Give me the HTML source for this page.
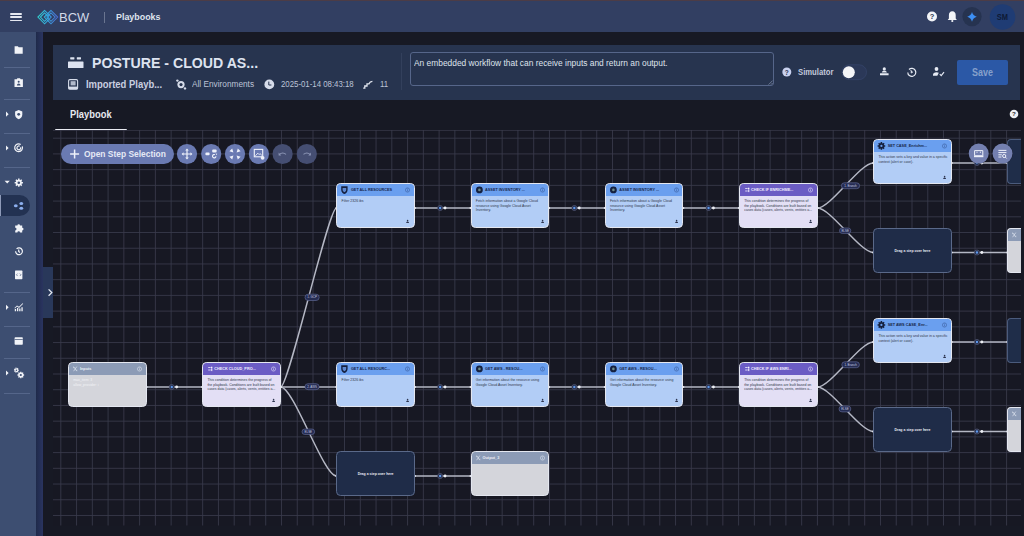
<!DOCTYPE html><html><head><meta charset="utf-8"><title>Playbooks</title><style>
*{box-sizing:border-box}
html,body{margin:0;padding:0;width:1024px;height:536px;overflow:hidden;background:#171924;font-family:"Liberation Sans",sans-serif;}
.a{position:absolute}
.node{position:absolute;width:78.5px;height:44.8px;border-radius:4.5px;overflow:hidden;border:1px solid #e4e7f0}
.node .hd{position:absolute;left:0;top:0;right:0;height:11.6px}
.node .tt{position:absolute;left:14px;top:3.6px;font-size:3.8px;font-weight:bold;white-space:nowrap;letter-spacing:0}
.node .bd{position:absolute;left:4.2px;top:15.2px;font-size:3.5px;line-height:4.5px;color:#30374b;white-space:nowrap}
.gray .bd{color:#f2f3f6}
.blue{background:#b2cdf6}
.blue .hd{background:#6a9fef}
.blue .tt{color:#172649}
.purp{background:#e3dff5}
.purp .hd{background:#6b5cc4}
.purp .tt{color:#f1efff}
.gray{background:#d4d5db}
.gray .hd{background:#8c9bb6}
.gray .tt{color:#eef1f7}
.drag{position:absolute;width:78.5px;height:44.6px;border-radius:4.5px;background:#1f2c48;border:1px solid #5a6989}
.drag span{position:absolute;left:0;right:0;top:20.3px;text-align:center;color:#e9ecf4;font-size:3.5px;font-weight:bold}
</style></head><body>
<div class="a" style="left:0;top:0;width:1024px;height:32px;background:#323f62"></div>
<div class="a" style="left:0;top:0;width:1024px;height:1px;background:#4c3c46"></div>
<div class="a" style="left:10px;top:13px;width:12px;height:1.6px;background:#e5e8f0;border-radius:1px"></div>
<div class="a" style="left:10px;top:16.3px;width:12px;height:1.6px;background:#e5e8f0;border-radius:1px"></div>
<div class="a" style="left:10px;top:19.6px;width:12px;height:1.6px;background:#e5e8f0;border-radius:1px"></div>
<svg class="a" style="left:34px;top:6px" width="28" height="22" viewBox="34 6 28 22">
<defs><linearGradient id="lg" gradientUnits="userSpaceOnUse" x1="37" x2="58" y1="0" y2="0"><stop offset="0" stop-color="#31d4cc"/><stop offset="0.5" stop-color="#35a9e2"/><stop offset="1" stop-color="#4d68d0"/></linearGradient></defs>
<g fill="none" stroke="url(#lg)" stroke-width="1.05">
<path d="M44.6 10.4 L37.9 17.1 L44.6 23.8 L51.3 17.1z"/>
<path d="M44.6 12.9 L40.4 17.1 L44.6 21.3 L48.8 17.1z"/>
<path d="M51 10.4 L44.3 17.1 L51 23.8 L57.7 17.1z"/>
<path d="M51 12.9 L46.8 17.1 L51 21.3 L55.2 17.1z"/>
</g><circle cx="47.8" cy="17.1" r="0.9" fill="#2f8fd0"/></svg>
<div class="a" style="left:59.4px;top:11.57px;font-size:12.21px;line-height:1;font-weight:normal;color:#d3dae8;white-space:nowrap;transform-origin:0 0;transform:scaleX(1.060);">BCW</div>
<div class="a" style="left:104px;top:11.5px;width:1px;height:11px;background:#6a7590"></div>
<div class="a" style="left:115.5px;top:12.54px;font-size:9.05px;line-height:1;font-weight:bold;color:#dfe4ee;white-space:nowrap;transform-origin:0 0;transform:scaleX(0.982);">Playbooks</div>
<svg class="a" style="left:920px;top:0" width="104" height="34" viewBox="0 0 104 34">
<circle cx="12" cy="16.5" r="5" fill="#f2f4f8"/>
<text x="12" y="19.3" font-size="7.5" font-weight="bold" text-anchor="middle" fill="#2b3550" font-family="Liberation Sans">?</text>
<path d="M32.3 11.3 c-2.3 0 -3.4 1.8 -3.4 3.8 v3.3 l-1.2 1.6 h9.2 l-1.2 -1.6 v-3.3 c0 -2 -1.1 -3.8 -3.4 -3.8z" fill="#f2f4f8"/>
<circle cx="32.3" cy="21" r="1.1" fill="#f2f4f8"/>
<circle cx="52" cy="16.6" r="9.6" fill="#263350"/>
<path d="M52 12 Q53 15.8 56.8 16.8 Q53 17.8 52 21.8 Q51 17.8 47.2 16.8 Q51 15.8 52 12z" fill="#3d8ff3"/>
<circle cx="82.5" cy="17" r="12.8" fill="#1f3c74"/>
<text x="82.3" y="20.1" font-size="8.2" font-weight="bold" text-anchor="middle" fill="#0e1a35" font-family="Liberation Sans" textLength="11.2" lengthAdjust="spacingAndGlyphs">SM</text>
</svg>
<div class="a" style="left:0;top:32px;width:36px;height:504px;background:#3d4e71"></div>
<div class="a" style="left:36px;top:32px;width:7px;height:504px;background:linear-gradient(90deg,#1f2a4a,#2a3460)"></div>
<div class="a" style="left:4px;top:66.5px;width:26px;height:1px;background:#55668a"></div>
<div class="a" style="left:4px;top:98.5px;width:26px;height:1px;background:#55668a"></div>
<div class="a" style="left:4px;top:133px;width:26px;height:1px;background:#55668a"></div>
<div class="a" style="left:4px;top:166.5px;width:26px;height:1px;background:#55668a"></div>
<div class="a" style="left:4px;top:291.5px;width:26px;height:1px;background:#55668a"></div>
<div class="a" style="left:4px;top:326px;width:26px;height:1px;background:#55668a"></div>
<div class="a" style="left:4px;top:357.5px;width:26px;height:1px;background:#55668a"></div>
<div class="a" style="left:4px;top:392.5px;width:26px;height:1px;background:#55668a"></div>
<div class="a" style="left:0;top:195px;width:30px;height:21px;background:#233252;border-radius:0 11px 11px 0"></div>
<div class="a" style="left:0;top:195px;width:1.2px;height:21px;background:#8e9ab8"></div>
<svg class="a" style="left:0;top:32px" width="36" height="504" viewBox="0 32 36 504">
<g fill="#f1f3f8">
<!-- folder -->
<path d="M14.6 46.2 h3.2 l0.9 1 h4 v6.6 h-8.1z"/>
<!-- badge -->
<path d="M14.5 79.3 h2.2 l0.7 -1 h2.6 l0.7 1 h2.2 v7.6 h-8.4z"/>
<!-- shield -->
<path d="M18.7 110 l3.6 1.4 v3 c0 2.5 -1.6 4 -3.6 4.8 c-2 -0.8 -3.6 -2.3 -3.6 -4.8 v-3z"/>
<!-- arrows -->
<path d="M6 111.6 l2.6 2.6 l-2.6 2.6z"/>
<path d="M6 145.4 l2.6 2.6 l-2.6 2.6z"/>
<path d="M4.6 180.8 l5.2 0 l-2.6 2.8z"/>
<path d="M6 304.7 l2.6 2.6 l-2.6 2.6z"/>
<path d="M6 370.4 l2.6 2.6 l-2.6 2.6z"/>
<!-- chart -->
<path d="M14.8 311.2 h1.3 v-2.2 h-1.3z M17 311.2 h1.3 v-3.2 h-1.3z M19.2 311.2 h1.3 v-2.6 h-1.3z M21.4 311.2 h1.3 v-4 h-1.3z"/><path d="M14.4 308 l2.6 -2.6 l2 1.4 l3.6 -3.6 l0.6 0.6 l-4.2 4.2 l-2 -1.4 l-2 2z"/>
<!-- window -->
<rect x="14.6" y="337.3" width="8.2" height="7.4" rx="0.8"/>
<!-- code doc -->
<rect x="15" y="270.6" width="7.4" height="8.6" rx="0.6"/>
<!-- puzzle -->
<path d="M15.2 225.6 h2.2 a1.3 1.3 0 0 1 2.6 0 h2.2 v2.2 a1.3 1.3 0 0 1 0 2.6 v2.2 h-2.2 a1.3 1.3 0 0 0 -2.6 0 h-2.2 v-2.2 a1.3 1.3 0 0 0 0 -2.6z"/>
</g>
<g fill="none" stroke="#f1f3f8" stroke-width="1.2">
<!-- radar -->
<path d="M22.3 146.4 a3.9 3.9 0 1 1 -1.6 -2"/><path d="M20.6 147.2 a1.9 1.9 0 1 1 -0.9 -1"/>
<!-- gear -->

<!-- history -->
<path d="M15.6 251.3 a3.4 3.4 0 1 0 1 -2.4"/>
<path d="M18.7 249.6 v1.9 l1.2 0.9"/>
<!-- gears -->

</g>
<g fill="#3d4e71">
<path d="M17.6 273.6 l-1.2 1.2 l1.2 1.2 M19.8 273.6 l1.2 1.2 l-1.2 1.2" fill="none" stroke="#3d4e71" stroke-width="0.6"/>
<circle cx="18.7" cy="81.8" r="1"/><path d="M16.9 85.4 c0 -1.3 0.8 -2 1.8 -2 c1 0 1.8 0.7 1.8 2z"/>
<circle cx="18.7" cy="114.3" r="1.4"/>
<rect x="14.6" y="339.2" width="8.2" height="0.7"/>
</g>
<g fill="#f1f3f8">
<path d="M17.5 178.8 h2.6 l0.4 1.4 l1.3 -0.6 l1.3 2.1 l-1 1 l1 1 l-1.3 2.1 l-1.3 -0.6 l-0.4 1.4 h-2.6 l-0.4 -1.4 l-1.3 0.6 l-1.3 -2.1 l1 -1 l-1 -1 l1.3 -2.1 l1.3 0.6z" opacity="0"/>
</g>
<path d="M21.81 181.96 L22.93 181.96 L22.93 183.44 L21.81 183.44 L21.45 184.31 L22.25 185.10 L21.20 186.15 L20.41 185.35 L19.54 185.71 L19.54 186.83 L18.06 186.83 L18.06 185.71 L17.19 185.35 L16.40 186.15 L15.35 185.10 L16.15 184.31 L15.79 183.44 L14.67 183.44 L14.67 181.96 L15.79 181.96 L16.15 181.09 L15.35 180.30 L16.40 179.25 L17.19 180.05 L18.06 179.69 L18.06 178.57 L19.54 178.57 L19.54 179.69 L20.41 180.05 L21.20 179.25 L22.25 180.30 L21.45 181.09z" fill="#f1f3f8"/><circle cx="18.8" cy="182.7" r="1.3" fill="#3d4e71"/>
<path d="M18.12 369.67 L18.93 369.62 L18.93 370.78 L18.12 370.73 L17.88 371.22 L18.43 371.82 L17.53 372.54 L17.06 371.87 L16.53 372.00 L16.40 372.80 L15.27 372.54 L15.50 371.76 L15.08 371.42 L14.37 371.82 L13.87 370.78 L14.62 370.47 L14.62 369.93 L13.87 369.62 L14.37 368.58 L15.08 368.98 L15.50 368.64 L15.27 367.86 L16.40 367.60 L16.53 368.40 L17.06 368.53 L17.53 367.86 L18.43 368.58 L17.88 369.18z" fill="#f1f3f8"/><circle cx="16.4" cy="370.2" r="0.8" fill="#3d4e71"/><path d="M23.22 374.36 L24.13 374.34 L24.13 375.66 L23.22 375.64 L22.96 376.26 L23.63 376.89 L22.69 377.83 L22.06 377.16 L21.44 377.42 L21.46 378.33 L20.14 378.33 L20.16 377.42 L19.54 377.16 L18.91 377.83 L17.97 376.89 L18.64 376.26 L18.38 375.64 L17.47 375.66 L17.47 374.34 L18.38 374.36 L18.64 373.74 L17.97 373.11 L18.91 372.17 L19.54 372.84 L20.16 372.58 L20.14 371.67 L21.46 371.67 L21.44 372.58 L22.06 372.84 L22.69 372.17 L23.63 373.11 L22.96 373.74z" fill="#f1f3f8"/><circle cx="20.8" cy="375" r="1.1" fill="#3d4e71"/>
<!-- share icon in active -->
<g fill="#8db0ef">
<ellipse cx="15.8" cy="205.8" rx="1.9" ry="1.5"/>
<ellipse cx="21.3" cy="203.6" rx="1.9" ry="1.5"/>
<ellipse cx="21.3" cy="208.2" rx="1.9" ry="1.5"/>
</g>
</svg>
<div class="a" style="left:43px;top:267px;width:15px;height:50.5px;background:#29385a;border-radius:0 3px 3px 0"></div>
<svg class="a" style="left:46px;top:287px" width="10" height="12"><path d="M2.6 2.4 L5.8 5.6 L2.6 8.8" fill="none" stroke="#e8ecf4" stroke-width="1.3"/></svg>
<div class="a" style="left:53px;top:44.5px;width:966.5px;height:55px;background:#27344f"></div>
<svg class="a" style="left:66px;top:54px" width="20" height="16" viewBox="0 0 20 16">
<g fill="#dde3f0"><rect x="2" y="7.5" width="15.5" height="6.6" rx="0.6"/><rect x="4.2" y="3.2" width="4.2" height="2.2" rx="0.4"/><rect x="10.8" y="3.2" width="4.2" height="2.2" rx="0.4"/></g></svg>
<div class="a" style="left:91.6px;top:55.88px;font-size:14.68px;line-height:1;font-weight:bold;color:#dde3f0;white-space:nowrap;transform-origin:0 0;transform:scaleX(0.964);">POSTURE - CLOUD AS...</div>
<svg class="a" style="left:64px;top:76px" width="230" height="16" viewBox="64 76 230 16">
<g fill="none" stroke="#d6dcea" stroke-width="1.1"><rect x="68.6" y="79.6" width="9" height="9.6" rx="1.2"/></g>
<rect x="70.6" y="81.2" width="5" height="4.2" fill="#d6dcea" opacity="0.8"/><rect x="68.6" y="86.6" width="9" height="2.6" fill="#d6dcea"/>
<g fill="#d6dcea"><circle cx="181" cy="84.6" r="3.6"/><circle cx="177.4" cy="80.6" r="1.2"/><circle cx="185" cy="88.4" r="1.2"/></g>
<circle cx="181" cy="84.6" r="1.6" fill="#27344f"/>
<circle cx="269.3" cy="84.4" r="4.9" fill="#d6dcea"/>
<path d="M268.8 81.6 v3.4 h2.6" fill="none" stroke="#27344f" stroke-width="1"/>
</g>
</svg>
<div class="a" style="left:86px;top:79.62px;font-size:10.01px;line-height:1;font-weight:bold;color:#c9cfe0;white-space:nowrap;transform-origin:0 0;transform:scaleX(0.944);">Imported Playb...</div>
<div class="a" style="left:192.3px;top:79.94px;font-size:9.05px;line-height:1;font-weight:normal;color:#bcc3d6;white-space:nowrap;transform-origin:0 0;transform:scaleX(0.914);">All Environments</div>
<div class="a" style="left:280.8px;top:80.34px;font-size:9.05px;line-height:1;font-weight:normal;color:#bcc3d6;white-space:nowrap;transform-origin:0 0;transform:scaleX(0.865);">2025-01-14 08:43:18</div>
<svg class="a" style="left:360px;top:78px" width="16" height="14"><path d="M3.2 10.2 h1.6 v-2.2 h2.2 v-2.2 h2 c0.6 -1.4 1.6 -2.2 3.4 -2.4" fill="none" stroke="#e3e7f0" stroke-width="1.3"/></svg>
<div class="a" style="left:379.7px;top:80.34px;font-size:9.05px;line-height:1;font-weight:normal;color:#bcc3d6;white-space:nowrap;transform-origin:0 0;transform:scaleX(0.865);">11</div>
<div class="a" style="left:401px;top:53px;width:1px;height:37px;background:#33405c"></div>
<div class="a" style="left:409.5px;top:52px;width:364px;height:33.5px;border:1px solid #56668a;border-radius:3px;background:#27344f"></div>
<svg class="a" style="left:766px;top:78px" width="8" height="8"><path d="M6.6 2.6 l-4 4 M6.6 5 l-1.6 1.6" stroke="#8a96b0" stroke-width="0.7"/></svg>
<div class="a" style="left:414.3px;top:58.74px;font-size:9.05px;line-height:1;font-weight:normal;color:#dfe3ec;white-space:nowrap;transform-origin:0 0;transform:scaleX(0.927);">An embedded workflow that can receive inputs and return an output.</div>
<svg class="a" style="left:775px;top:55px" width="180" height="35" viewBox="775 55 180 35">
<circle cx="786.8" cy="72" r="4.5" fill="#c9d1ef"/>
<text x="786.8" y="74.6" font-size="6.5" font-weight="bold" text-anchor="middle" fill="#27344f" font-family="Liberation Sans">?</text>
<rect x="842" y="64.8" width="24.5" height="14.8" rx="7.4" fill="#2b3858" stroke="#35446a" stroke-width="0.8"/>
<circle cx="848.8" cy="72.2" r="6" fill="#f4f5f8"/>
<g fill="#e6eaf3">
<circle cx="884.3" cy="68.9" r="1.6"/><path d="M881.8 72.6 c0 -1.2 1.1 -1.8 2.5 -1.8 c1.4 0 2.5 0.6 2.5 1.8z"/>
<rect x="880" y="73.2" width="8.6" height="2" rx="0.3"/>
<path d="M933 75.8 v-1 c0 -1.6 1.4 -2.6 3.5 -2.6 c0.9 0 1.7 0.2 2.3 0.6 l-1.5 3z"/>
</g>
<circle cx="936.5" cy="69" r="1.9" fill="#e6eaf3"/>
<g fill="none" stroke="#e6eaf3" stroke-width="1.2">
<path d="M907.8 72.4 a4 4 0 1 0 1.2 -2.9"/>
<path d="M910.6 70.4 l1.6 1.8 l-1.4 0.8"/>
<path d="M939.8 74.2 l1.4 1.4 l2.8 -3.4" stroke-width="1.2"/>
</g>
</svg>
<div class="a" style="left:797.5px;top:68.38px;font-size:8.64px;line-height:1;font-weight:bold;color:#c3c9dc;white-space:nowrap;transform-origin:0 0;transform:scaleX(0.891);">Simulator</div>
<div class="a" style="left:957px;top:59.5px;width:51px;height:25.5px;background:#2b58a6;border-radius:2px"></div>
<div class="a" style="left:971.8px;top:67.61px;font-size:10.15px;line-height:1;font-weight:bold;color:#86a0cb;white-space:nowrap;transform-origin:0 0;transform:scaleX(0.882);">Save</div>
<div class="a" style="left:69.5px;top:110.21px;font-size:10.15px;line-height:1;font-weight:bold;color:#e6e8ef;white-space:nowrap;transform-origin:0 0;transform:scaleX(0.924);">Playbook</div>
<div class="a" style="left:54.5px;top:128.6px;width:72px;height:2px;background:#e9ebf2;border-radius:1px"></div>
<svg class="a" style="left:1008px;top:108px" width="12" height="12"><circle cx="6" cy="6" r="4.3" fill="#eef0f5"/><text x="6" y="8.4" font-size="6.2" font-weight="bold" text-anchor="middle" fill="#1b1c26" font-family="Liberation Sans">?</text></svg>
<div class="a" style="left:53px;top:130px;width:968px;height:395.5px;background:#171823;overflow:hidden">
<svg class="a" style="left:0;top:0" width="968" height="395.5" viewBox="53 130 968 395.5">
<g stroke="#3a3b4c" stroke-width="0.85">
<line x1="60.80" y1="130" x2="60.80" y2="525.5"/>
<line x1="76.56" y1="130" x2="76.56" y2="525.5"/>
<line x1="92.33" y1="130" x2="92.33" y2="525.5"/>
<line x1="108.09" y1="130" x2="108.09" y2="525.5"/>
<line x1="123.85" y1="130" x2="123.85" y2="525.5"/>
<line x1="139.62" y1="130" x2="139.62" y2="525.5"/>
<line x1="155.38" y1="130" x2="155.38" y2="525.5"/>
<line x1="171.14" y1="130" x2="171.14" y2="525.5"/>
<line x1="186.90" y1="130" x2="186.90" y2="525.5"/>
<line x1="202.67" y1="130" x2="202.67" y2="525.5"/>
<line x1="218.43" y1="130" x2="218.43" y2="525.5"/>
<line x1="234.19" y1="130" x2="234.19" y2="525.5"/>
<line x1="249.96" y1="130" x2="249.96" y2="525.5"/>
<line x1="265.72" y1="130" x2="265.72" y2="525.5"/>
<line x1="281.48" y1="130" x2="281.48" y2="525.5"/>
<line x1="297.25" y1="130" x2="297.25" y2="525.5"/>
<line x1="313.01" y1="130" x2="313.01" y2="525.5"/>
<line x1="328.77" y1="130" x2="328.77" y2="525.5"/>
<line x1="344.53" y1="130" x2="344.53" y2="525.5"/>
<line x1="360.30" y1="130" x2="360.30" y2="525.5"/>
<line x1="376.06" y1="130" x2="376.06" y2="525.5"/>
<line x1="391.82" y1="130" x2="391.82" y2="525.5"/>
<line x1="407.59" y1="130" x2="407.59" y2="525.5"/>
<line x1="423.35" y1="130" x2="423.35" y2="525.5"/>
<line x1="439.11" y1="130" x2="439.11" y2="525.5"/>
<line x1="454.87" y1="130" x2="454.87" y2="525.5"/>
<line x1="470.64" y1="130" x2="470.64" y2="525.5"/>
<line x1="486.40" y1="130" x2="486.40" y2="525.5"/>
<line x1="502.16" y1="130" x2="502.16" y2="525.5"/>
<line x1="517.93" y1="130" x2="517.93" y2="525.5"/>
<line x1="533.69" y1="130" x2="533.69" y2="525.5"/>
<line x1="549.45" y1="130" x2="549.45" y2="525.5"/>
<line x1="565.22" y1="130" x2="565.22" y2="525.5"/>
<line x1="580.98" y1="130" x2="580.98" y2="525.5"/>
<line x1="596.74" y1="130" x2="596.74" y2="525.5"/>
<line x1="612.50" y1="130" x2="612.50" y2="525.5"/>
<line x1="628.27" y1="130" x2="628.27" y2="525.5"/>
<line x1="644.03" y1="130" x2="644.03" y2="525.5"/>
<line x1="659.79" y1="130" x2="659.79" y2="525.5"/>
<line x1="675.56" y1="130" x2="675.56" y2="525.5"/>
<line x1="691.32" y1="130" x2="691.32" y2="525.5"/>
<line x1="707.08" y1="130" x2="707.08" y2="525.5"/>
<line x1="722.85" y1="130" x2="722.85" y2="525.5"/>
<line x1="738.61" y1="130" x2="738.61" y2="525.5"/>
<line x1="754.37" y1="130" x2="754.37" y2="525.5"/>
<line x1="770.14" y1="130" x2="770.14" y2="525.5"/>
<line x1="785.90" y1="130" x2="785.90" y2="525.5"/>
<line x1="801.66" y1="130" x2="801.66" y2="525.5"/>
<line x1="817.42" y1="130" x2="817.42" y2="525.5"/>
<line x1="833.19" y1="130" x2="833.19" y2="525.5"/>
<line x1="848.95" y1="130" x2="848.95" y2="525.5"/>
<line x1="864.71" y1="130" x2="864.71" y2="525.5"/>
<line x1="880.48" y1="130" x2="880.48" y2="525.5"/>
<line x1="896.24" y1="130" x2="896.24" y2="525.5"/>
<line x1="912.00" y1="130" x2="912.00" y2="525.5"/>
<line x1="927.77" y1="130" x2="927.77" y2="525.5"/>
<line x1="943.53" y1="130" x2="943.53" y2="525.5"/>
<line x1="959.29" y1="130" x2="959.29" y2="525.5"/>
<line x1="975.05" y1="130" x2="975.05" y2="525.5"/>
<line x1="990.82" y1="130" x2="990.82" y2="525.5"/>
<line x1="1006.58" y1="130" x2="1006.58" y2="525.5"/>
<line x1="53" y1="138.20" x2="1021" y2="138.20"/>
<line x1="53" y1="153.92" x2="1021" y2="153.92"/>
<line x1="53" y1="169.64" x2="1021" y2="169.64"/>
<line x1="53" y1="185.36" x2="1021" y2="185.36"/>
<line x1="53" y1="201.08" x2="1021" y2="201.08"/>
<line x1="53" y1="216.80" x2="1021" y2="216.80"/>
<line x1="53" y1="232.52" x2="1021" y2="232.52"/>
<line x1="53" y1="248.24" x2="1021" y2="248.24"/>
<line x1="53" y1="263.96" x2="1021" y2="263.96"/>
<line x1="53" y1="279.68" x2="1021" y2="279.68"/>
<line x1="53" y1="295.40" x2="1021" y2="295.40"/>
<line x1="53" y1="311.12" x2="1021" y2="311.12"/>
<line x1="53" y1="326.84" x2="1021" y2="326.84"/>
<line x1="53" y1="342.56" x2="1021" y2="342.56"/>
<line x1="53" y1="358.28" x2="1021" y2="358.28"/>
<line x1="53" y1="374.00" x2="1021" y2="374.00"/>
<line x1="53" y1="389.72" x2="1021" y2="389.72"/>
<line x1="53" y1="405.44" x2="1021" y2="405.44"/>
<line x1="53" y1="421.16" x2="1021" y2="421.16"/>
<line x1="53" y1="436.88" x2="1021" y2="436.88"/>
<line x1="53" y1="452.60" x2="1021" y2="452.60"/>
<line x1="53" y1="468.32" x2="1021" y2="468.32"/>
<line x1="53" y1="484.04" x2="1021" y2="484.04"/>
<line x1="53" y1="499.76" x2="1021" y2="499.76"/>
<line x1="53" y1="515.48" x2="1021" y2="515.48"/>
<line x1="53" y1="130.3" x2="1021" y2="130.3"/>
</g>
<g fill="none" stroke="#b4b7c4" stroke-width="1.45">
<path d="M146.5 387 L202.2 387"/>
<path d="M414.9 208 L470.59999999999997 208"/>
<path d="M549.0999999999999 208 L604.8 208"/>
<path d="M683.3 208 L739.0 208"/>
<path d="M951.6999999999999 163 L1007.3999999999999 163"/>
<path d="M951.6999999999999 252.5 L1007.3999999999999 252.5"/>
<path d="M414.9 387 L470.59999999999997 387"/>
<path d="M549.0999999999999 387 L604.8 387"/>
<path d="M683.3 387 L739.0 387"/>
<path d="M951.6999999999999 342 L1007.3999999999999 342"/>
<path d="M951.6999999999999 431.5 L1007.3999999999999 431.5"/>
<path d="M414.9 476 L470.59999999999997 476"/>
<path d="M280.7 387 C288.7 387 328.4 208 336.4 208"/>
<path d="M280.7 387 C293.7 387 323.4 387 336.4 387"/>
<path d="M280.7 387 C293.7 387 323.4 476 336.4 476"/>
<path d="M817.5 208 C830.5 208 860.1999999999999 163 873.1999999999999 163"/>
<path d="M817.5 208 C830.5 208 860.1999999999999 252.5 873.1999999999999 252.5"/>
<path d="M817.5 387 C830.5 387 860.1999999999999 342 873.1999999999999 342"/>
<path d="M817.5 387 C830.5 387 860.1999999999999 431.5 873.1999999999999 431.5"/>
</g>
<g fill="#e8eaf0">
<circle cx="146.5" cy="387" r="1.1"/><circle cx="202.2" cy="387" r="1.1"/>
<circle cx="414.9" cy="208" r="1.1"/><circle cx="470.59999999999997" cy="208" r="1.1"/>
<circle cx="549.0999999999999" cy="208" r="1.1"/><circle cx="604.8" cy="208" r="1.1"/>
<circle cx="683.3" cy="208" r="1.1"/><circle cx="739.0" cy="208" r="1.1"/>
<circle cx="951.6999999999999" cy="163" r="1.1"/><circle cx="1007.3999999999999" cy="163" r="1.1"/>
<circle cx="951.6999999999999" cy="252.5" r="1.1"/><circle cx="1007.3999999999999" cy="252.5" r="1.1"/>
<circle cx="414.9" cy="387" r="1.1"/><circle cx="470.59999999999997" cy="387" r="1.1"/>
<circle cx="549.0999999999999" cy="387" r="1.1"/><circle cx="604.8" cy="387" r="1.1"/>
<circle cx="683.3" cy="387" r="1.1"/><circle cx="739.0" cy="387" r="1.1"/>
<circle cx="951.6999999999999" cy="342" r="1.1"/><circle cx="1007.3999999999999" cy="342" r="1.1"/>
<circle cx="951.6999999999999" cy="431.5" r="1.1"/><circle cx="1007.3999999999999" cy="431.5" r="1.1"/>
<circle cx="414.9" cy="476" r="1.1"/><circle cx="470.59999999999997" cy="476" r="1.1"/>
<circle cx="280.7" cy="387" r="1.1"/><circle cx="336.4" cy="208" r="1.1"/>
<circle cx="280.7" cy="387" r="1.1"/><circle cx="336.4" cy="387" r="1.1"/>
<circle cx="280.7" cy="387" r="1.1"/><circle cx="336.4" cy="476" r="1.1"/>
<circle cx="817.5" cy="208" r="1.1"/><circle cx="873.1999999999999" cy="163" r="1.1"/>
<circle cx="817.5" cy="208" r="1.1"/><circle cx="873.1999999999999" cy="252.5" r="1.1"/>
<circle cx="817.5" cy="387" r="1.1"/><circle cx="873.1999999999999" cy="342" r="1.1"/>
<circle cx="817.5" cy="387" r="1.1"/><circle cx="873.1999999999999" cy="431.5" r="1.1"/>
</g>
<circle cx="171.75" cy="387" r="2.5" fill="#1e2540" stroke="#545b78" stroke-width="0.8"/>
<circle cx="171.75" cy="387" r="1.2" fill="#5f98ea"/>
<circle cx="176.65" cy="387" r="1.4" fill="#eef0f5"/>
<circle cx="440.15" cy="208" r="2.5" fill="#1e2540" stroke="#545b78" stroke-width="0.8"/>
<circle cx="440.15" cy="208" r="1.2" fill="#5f98ea"/>
<circle cx="445.05" cy="208" r="1.4" fill="#eef0f5"/>
<circle cx="574.3499999999999" cy="208" r="2.5" fill="#1e2540" stroke="#545b78" stroke-width="0.8"/>
<circle cx="574.3499999999999" cy="208" r="1.2" fill="#5f98ea"/>
<circle cx="579.2499999999999" cy="208" r="1.4" fill="#eef0f5"/>
<circle cx="708.55" cy="208" r="2.5" fill="#1e2540" stroke="#545b78" stroke-width="0.8"/>
<circle cx="708.55" cy="208" r="1.2" fill="#5f98ea"/>
<circle cx="713.4499999999999" cy="208" r="1.4" fill="#eef0f5"/>
<circle cx="976.9499999999999" cy="163" r="2.5" fill="#1e2540" stroke="#545b78" stroke-width="0.8"/>
<circle cx="976.9499999999999" cy="163" r="1.2" fill="#5f98ea"/>
<circle cx="981.8499999999999" cy="163" r="1.4" fill="#eef0f5"/>
<circle cx="976.9499999999999" cy="252.5" r="2.5" fill="#1e2540" stroke="#545b78" stroke-width="0.8"/>
<circle cx="976.9499999999999" cy="252.5" r="1.2" fill="#5f98ea"/>
<circle cx="981.8499999999999" cy="252.5" r="1.4" fill="#eef0f5"/>
<circle cx="440.15" cy="387" r="2.5" fill="#1e2540" stroke="#545b78" stroke-width="0.8"/>
<circle cx="440.15" cy="387" r="1.2" fill="#5f98ea"/>
<circle cx="445.05" cy="387" r="1.4" fill="#eef0f5"/>
<circle cx="574.3499999999999" cy="387" r="2.5" fill="#1e2540" stroke="#545b78" stroke-width="0.8"/>
<circle cx="574.3499999999999" cy="387" r="1.2" fill="#5f98ea"/>
<circle cx="579.2499999999999" cy="387" r="1.4" fill="#eef0f5"/>
<circle cx="708.55" cy="387" r="2.5" fill="#1e2540" stroke="#545b78" stroke-width="0.8"/>
<circle cx="708.55" cy="387" r="1.2" fill="#5f98ea"/>
<circle cx="713.4499999999999" cy="387" r="1.4" fill="#eef0f5"/>
<circle cx="976.9499999999999" cy="342" r="2.5" fill="#1e2540" stroke="#545b78" stroke-width="0.8"/>
<circle cx="976.9499999999999" cy="342" r="1.2" fill="#5f98ea"/>
<circle cx="981.8499999999999" cy="342" r="1.4" fill="#eef0f5"/>
<circle cx="976.9499999999999" cy="431.5" r="2.5" fill="#1e2540" stroke="#545b78" stroke-width="0.8"/>
<circle cx="976.9499999999999" cy="431.5" r="1.2" fill="#5f98ea"/>
<circle cx="981.8499999999999" cy="431.5" r="1.4" fill="#eef0f5"/>
<circle cx="440.15" cy="476" r="2.5" fill="#1e2540" stroke="#545b78" stroke-width="0.8"/>
<circle cx="440.15" cy="476" r="1.2" fill="#5f98ea"/>
<circle cx="445.05" cy="476" r="1.4" fill="#eef0f5"/>
<rect x="305" y="294.2" width="14.20" height="6.30" rx="3.15" fill="#252c52" stroke="#5d6590" stroke-width="0.7"/>
<text x="312.10" y="298.40" font-size="2.9" text-anchor="middle" fill="#c9cde2" font-family="Liberation Sans">1. GCP</text>
<rect x="305" y="383.7" width="14.10" height="6.00" rx="3.00" fill="#252c52" stroke="#5d6590" stroke-width="0.7"/>
<text x="312.05" y="387.75" font-size="2.9" text-anchor="middle" fill="#c9cde2" font-family="Liberation Sans">2. AWS</text>
<rect x="302" y="429" width="12.60" height="5.50" rx="2.75" fill="#252c52" stroke="#5d6590" stroke-width="0.7"/>
<text x="308.30" y="432.80" font-size="2.9" text-anchor="middle" fill="#c9cde2" font-family="Liberation Sans">ELSE</text>
<rect x="841.4" y="182.8" width="18.20" height="5.90" rx="2.95" fill="#252c52" stroke="#5d6590" stroke-width="0.7"/>
<text x="850.50" y="186.80" font-size="2.9" text-anchor="middle" fill="#c9cde2" font-family="Liberation Sans">1. Branch</text>
<rect x="839.5" y="228" width="11.30" height="5.40" rx="2.70" fill="#252c52" stroke="#5d6590" stroke-width="0.7"/>
<text x="845.15" y="231.75" font-size="2.9" text-anchor="middle" fill="#c9cde2" font-family="Liberation Sans">ELSE</text>
<rect x="841.8" y="361.8" width="17.60" height="5.90" rx="2.95" fill="#252c52" stroke="#5d6590" stroke-width="0.7"/>
<text x="850.60" y="365.80" font-size="2.9" text-anchor="middle" fill="#c9cde2" font-family="Liberation Sans">1. Branch</text>
<rect x="839" y="406" width="11.80" height="5.90" rx="2.95" fill="#252c52" stroke="#5d6590" stroke-width="0.7"/>
<text x="844.90" y="410.00" font-size="2.9" text-anchor="middle" fill="#c9cde2" font-family="Liberation Sans">ELSE</text>
</svg>
</div>
<div class="node gray" style="left:68.00px;top:362px"><div class="hd"></div><svg class="a" style="left:-1px;top:-1px" width="78" height="45" viewBox="0 0 78 45"><path d="M5.6 4.6 l3.2 4.6 M8.8 4.6 l-3.2 4.6" stroke="#dfe5f0" stroke-width="0.7"/><path d="M5 5.6 h1.2 M8.2 8.2 h1.2" stroke="#dfe5f0" stroke-width="0.6"/><circle cx="71.5" cy="7" r="2.1" fill="none" stroke="#e2e7f0" stroke-width="0.55"/><path d="M71.5 6.3 v2" stroke="#e2e7f0" stroke-width="0.55"/><circle cx="71.5" cy="5.5" r="0.3" fill="#e2e7f0"/></svg><div class="tt" style="left:11px">Inputs</div><div class="bd">max_item: 3<br>allow_provider: i</div></div>
<div class="node purp" style="left:202.20px;top:362px"><div class="hd"></div><svg class="a" style="left:-1px;top:-1px" width="78" height="45" viewBox="0 0 78 45"><g fill="#f1efff"><rect x="6.2" y="5.2" width="2.4" height="0.8"/><rect x="6.2" y="7.6" width="2.4" height="0.8"/><circle cx="9.6" cy="5.6" r="0.8"/><circle cx="9.6" cy="8" r="0.8"/></g><path d="M9.8 4.6 v4.6" stroke="#f1efff" stroke-width="0.6"/><circle cx="71.5" cy="7" r="2.1" fill="none" stroke="#e6e2fb" stroke-width="0.55"/><path d="M71.5 6.3 v2" stroke="#e6e2fb" stroke-width="0.55"/><circle cx="71.5" cy="5.5" r="0.3" fill="#e6e2fb"/><circle cx="71.6" cy="37.6" r="0.8" fill="#2d3550"/><path d="M70.2 39.9 c0 -1 0.6 -1.5 1.4 -1.5 c0.8 0 1.4 0.5 1.4 1.5z" fill="#2d3550"/></svg><div class="tt" style="left:11px">CHECK CLOUD_PRO...</div><div class="bd">This condition determines the progress of<br>the playbook. Conditions are built based on<br>cases data (cases, alerts, vents, entities a...</div></div>
<div class="node blue" style="left:336.40px;top:183px"><div class="hd"></div><svg class="a" style="left:-1px;top:-1px" width="78" height="45" viewBox="0 0 78 45"><path d="M5.2 3.2 h6.4 v3.6 c0 2.2 -1.4 3.6 -3.2 4.3 c-1.8 -0.7 -3.2 -2.1 -3.2 -4.3z" fill="#15203f"/><path d="M6.6 5 h3.6 v1.8 c0 1.2 -0.8 2 -1.8 2.5 c-1 -0.5 -1.8 -1.3 -1.8 -2.5z" fill="#5d87cf"/><circle cx="71.5" cy="7" r="2.1" fill="none" stroke="#3a5c9c" stroke-width="0.55"/><path d="M71.5 6.3 v2" stroke="#3a5c9c" stroke-width="0.55"/><circle cx="71.5" cy="5.5" r="0.3" fill="#3a5c9c"/><circle cx="71.6" cy="37.6" r="0.8" fill="#2d3550"/><path d="M70.2 39.9 c0 -1 0.6 -1.5 1.4 -1.5 c0.8 0 1.4 0.5 1.4 1.5z" fill="#2d3550"/></svg><div class="tt" style="left:13.5px">GET ALL RESOURCES</div><div class="bd">Filter 2326 ibs</div></div>
<div class="node blue" style="left:470.60px;top:183px"><div class="hd"></div><svg class="a" style="left:-1px;top:-1px" width="78" height="45" viewBox="0 0 78 45"><circle cx="8.4" cy="6.9" r="3.4" fill="#15203f"/><circle cx="8.4" cy="6.9" r="1.3" fill="#6d8a8a"/><circle cx="71.5" cy="7" r="2.1" fill="none" stroke="#3a5c9c" stroke-width="0.55"/><path d="M71.5 6.3 v2" stroke="#3a5c9c" stroke-width="0.55"/><circle cx="71.5" cy="5.5" r="0.3" fill="#3a5c9c"/><circle cx="71.6" cy="37.6" r="0.8" fill="#2d3550"/><path d="M70.2 39.9 c0 -1 0.6 -1.5 1.4 -1.5 c0.8 0 1.4 0.5 1.4 1.5z" fill="#2d3550"/></svg><div class="tt" style="left:13.5px">ASSET INVENTORY ...</div><div class="bd">Fetch information about a Google Cloud<br>resource using Google Cloud Asset<br>Inventory.</div></div>
<div class="node blue" style="left:604.80px;top:183px"><div class="hd"></div><svg class="a" style="left:-1px;top:-1px" width="78" height="45" viewBox="0 0 78 45"><circle cx="8.4" cy="6.9" r="3.4" fill="#15203f"/><circle cx="8.4" cy="6.9" r="1.3" fill="#6d8a8a"/><circle cx="71.5" cy="7" r="2.1" fill="none" stroke="#3a5c9c" stroke-width="0.55"/><path d="M71.5 6.3 v2" stroke="#3a5c9c" stroke-width="0.55"/><circle cx="71.5" cy="5.5" r="0.3" fill="#3a5c9c"/><circle cx="71.6" cy="37.6" r="0.8" fill="#2d3550"/><path d="M70.2 39.9 c0 -1 0.6 -1.5 1.4 -1.5 c0.8 0 1.4 0.5 1.4 1.5z" fill="#2d3550"/></svg><div class="tt" style="left:13.5px">ASSET INVENTORY ...</div><div class="bd">Fetch information about a Google Cloud<br>resource using Google Cloud Asset<br>Inventory.</div></div>
<div class="node purp" style="left:739.00px;top:183px"><div class="hd"></div><svg class="a" style="left:-1px;top:-1px" width="78" height="45" viewBox="0 0 78 45"><g fill="#f1efff"><rect x="6.2" y="5.2" width="2.4" height="0.8"/><rect x="6.2" y="7.6" width="2.4" height="0.8"/><circle cx="9.6" cy="5.6" r="0.8"/><circle cx="9.6" cy="8" r="0.8"/></g><path d="M9.8 4.6 v4.6" stroke="#f1efff" stroke-width="0.6"/><circle cx="71.5" cy="7" r="2.1" fill="none" stroke="#e6e2fb" stroke-width="0.55"/><path d="M71.5 6.3 v2" stroke="#e6e2fb" stroke-width="0.55"/><circle cx="71.5" cy="5.5" r="0.3" fill="#e6e2fb"/><circle cx="71.6" cy="37.6" r="0.8" fill="#2d3550"/><path d="M70.2 39.9 c0 -1 0.6 -1.5 1.4 -1.5 c0.8 0 1.4 0.5 1.4 1.5z" fill="#2d3550"/></svg><div class="tt" style="left:11px">CHECK IF ENRICHME...</div><div class="bd">This condition determines the progress of<br>the playbook. Conditions are built based on<br>cases data (cases, alerts, vents, entities a...</div></div>
<div class="node blue" style="left:873.20px;top:139px"><div class="hd"></div><svg class="a" style="left:-1px;top:-1px" width="78" height="45" viewBox="0 0 78 45"><path d="M11.20 6.16 L12.23 6.14 L12.23 7.66 L11.20 7.64 L10.91 8.36 L11.64 9.07 L10.57 10.14 L9.86 9.41 L9.14 9.70 L9.16 10.73 L7.64 10.73 L7.66 9.70 L6.94 9.41 L6.23 10.14 L5.16 9.07 L5.89 8.36 L5.60 7.64 L4.57 7.66 L4.57 6.14 L5.60 6.16 L5.89 5.44 L5.16 4.73 L6.23 3.66 L6.94 4.39 L7.66 4.10 L7.64 3.07 L9.16 3.07 L9.14 4.10 L9.86 4.39 L10.57 3.66 L11.64 4.73 L10.91 5.44z" fill="#15203f"/><circle cx="8.4" cy="6.9" r="1.1" fill="#6a9fef"/><circle cx="71.5" cy="7" r="2.1" fill="none" stroke="#3a5c9c" stroke-width="0.55"/><path d="M71.5 6.3 v2" stroke="#3a5c9c" stroke-width="0.55"/><circle cx="71.5" cy="5.5" r="0.3" fill="#3a5c9c"/><circle cx="71.6" cy="37.6" r="0.8" fill="#2d3550"/><path d="M70.2 39.9 c0 -1 0.6 -1.5 1.4 -1.5 c0.8 0 1.4 0.5 1.4 1.5z" fill="#2d3550"/></svg><div class="tt" style="left:13.5px">SET CASE_Enrichm...</div><div class="bd">This action sets a key and value in a specific<br>context (alert or case).</div></div>
<div class="drag" style="left:873.20px;top:228px"><span>Drag a step over here</span></div>
<div class="node blue" style="left:336.40px;top:362px"><div class="hd"></div><svg class="a" style="left:-1px;top:-1px" width="78" height="45" viewBox="0 0 78 45"><path d="M5.2 3.2 h6.4 v3.6 c0 2.2 -1.4 3.6 -3.2 4.3 c-1.8 -0.7 -3.2 -2.1 -3.2 -4.3z" fill="#15203f"/><path d="M6.6 5 h3.6 v1.8 c0 1.2 -0.8 2 -1.8 2.5 c-1 -0.5 -1.8 -1.3 -1.8 -2.5z" fill="#5d87cf"/><circle cx="71.5" cy="7" r="2.1" fill="none" stroke="#3a5c9c" stroke-width="0.55"/><path d="M71.5 6.3 v2" stroke="#3a5c9c" stroke-width="0.55"/><circle cx="71.5" cy="5.5" r="0.3" fill="#3a5c9c"/><circle cx="71.6" cy="37.6" r="0.8" fill="#2d3550"/><path d="M70.2 39.9 c0 -1 0.6 -1.5 1.4 -1.5 c0.8 0 1.4 0.5 1.4 1.5z" fill="#2d3550"/></svg><div class="tt" style="left:13.5px">GET ALL RESOURC...</div><div class="bd">Filter 2326 ibs</div></div>
<div class="node blue" style="left:470.60px;top:362px"><div class="hd"></div><svg class="a" style="left:-1px;top:-1px" width="78" height="45" viewBox="0 0 78 45"><circle cx="8.4" cy="6.9" r="3.4" fill="#15203f"/><circle cx="8.4" cy="6.9" r="1.3" fill="#6d8a8a"/><circle cx="71.5" cy="7" r="2.1" fill="none" stroke="#3a5c9c" stroke-width="0.55"/><path d="M71.5 6.3 v2" stroke="#3a5c9c" stroke-width="0.55"/><circle cx="71.5" cy="5.5" r="0.3" fill="#3a5c9c"/><circle cx="71.6" cy="37.6" r="0.8" fill="#2d3550"/><path d="M70.2 39.9 c0 -1 0.6 -1.5 1.4 -1.5 c0.8 0 1.4 0.5 1.4 1.5z" fill="#2d3550"/></svg><div class="tt" style="left:13.5px">GET AWS - RESOU...</div><div class="bd">Get information about the resource using<br>Google Cloud Asset Inventory.</div></div>
<div class="node blue" style="left:604.80px;top:362px"><div class="hd"></div><svg class="a" style="left:-1px;top:-1px" width="78" height="45" viewBox="0 0 78 45"><circle cx="8.4" cy="6.9" r="3.4" fill="#15203f"/><circle cx="8.4" cy="6.9" r="1.3" fill="#6d8a8a"/><circle cx="71.5" cy="7" r="2.1" fill="none" stroke="#3a5c9c" stroke-width="0.55"/><path d="M71.5 6.3 v2" stroke="#3a5c9c" stroke-width="0.55"/><circle cx="71.5" cy="5.5" r="0.3" fill="#3a5c9c"/><circle cx="71.6" cy="37.6" r="0.8" fill="#2d3550"/><path d="M70.2 39.9 c0 -1 0.6 -1.5 1.4 -1.5 c0.8 0 1.4 0.5 1.4 1.5z" fill="#2d3550"/></svg><div class="tt" style="left:13.5px">GET AWS - RESOU...</div><div class="bd">Get information about the resource using<br>Google Cloud Asset Inventory.</div></div>
<div class="node purp" style="left:739.00px;top:362px"><div class="hd"></div><svg class="a" style="left:-1px;top:-1px" width="78" height="45" viewBox="0 0 78 45"><g fill="#f1efff"><rect x="6.2" y="5.2" width="2.4" height="0.8"/><rect x="6.2" y="7.6" width="2.4" height="0.8"/><circle cx="9.6" cy="5.6" r="0.8"/><circle cx="9.6" cy="8" r="0.8"/></g><path d="M9.8 4.6 v4.6" stroke="#f1efff" stroke-width="0.6"/><circle cx="71.5" cy="7" r="2.1" fill="none" stroke="#e6e2fb" stroke-width="0.55"/><path d="M71.5 6.3 v2" stroke="#e6e2fb" stroke-width="0.55"/><circle cx="71.5" cy="5.5" r="0.3" fill="#e6e2fb"/><circle cx="71.6" cy="37.6" r="0.8" fill="#2d3550"/><path d="M70.2 39.9 c0 -1 0.6 -1.5 1.4 -1.5 c0.8 0 1.4 0.5 1.4 1.5z" fill="#2d3550"/></svg><div class="tt" style="left:11px">CHECK IF AWS ENRI...</div><div class="bd">This condition determines the progress of<br>the playbook. Conditions are built based on<br>cases data (cases, alerts, vents, entities a...</div></div>
<div class="node blue" style="left:873.20px;top:318px"><div class="hd"></div><svg class="a" style="left:-1px;top:-1px" width="78" height="45" viewBox="0 0 78 45"><path d="M11.20 6.16 L12.23 6.14 L12.23 7.66 L11.20 7.64 L10.91 8.36 L11.64 9.07 L10.57 10.14 L9.86 9.41 L9.14 9.70 L9.16 10.73 L7.64 10.73 L7.66 9.70 L6.94 9.41 L6.23 10.14 L5.16 9.07 L5.89 8.36 L5.60 7.64 L4.57 7.66 L4.57 6.14 L5.60 6.16 L5.89 5.44 L5.16 4.73 L6.23 3.66 L6.94 4.39 L7.66 4.10 L7.64 3.07 L9.16 3.07 L9.14 4.10 L9.86 4.39 L10.57 3.66 L11.64 4.73 L10.91 5.44z" fill="#15203f"/><circle cx="8.4" cy="6.9" r="1.1" fill="#6a9fef"/><circle cx="71.5" cy="7" r="2.1" fill="none" stroke="#3a5c9c" stroke-width="0.55"/><path d="M71.5 6.3 v2" stroke="#3a5c9c" stroke-width="0.55"/><circle cx="71.5" cy="5.5" r="0.3" fill="#3a5c9c"/><circle cx="71.6" cy="37.6" r="0.8" fill="#2d3550"/><path d="M70.2 39.9 c0 -1 0.6 -1.5 1.4 -1.5 c0.8 0 1.4 0.5 1.4 1.5z" fill="#2d3550"/></svg><div class="tt" style="left:13.5px">SET AWS CASE_Enr...</div><div class="bd">This action sets a key and value in a specific<br>context (alert or case).</div></div>
<div class="drag" style="left:873.20px;top:407px"><span>Drag a step over here</span></div>
<div class="drag" style="left:336.40px;top:451px"><span>Drag a step over here</span></div>
<div class="node gray" style="left:470.60px;top:451px"><div class="hd"></div><svg class="a" style="left:-1px;top:-1px" width="78" height="45" viewBox="0 0 78 45"><path d="M5.6 4.6 l3.2 4.6 M8.8 4.6 l-3.2 4.6" stroke="#dfe5f0" stroke-width="0.7"/><path d="M5 5.6 h1.2 M8.2 8.2 h1.2" stroke="#dfe5f0" stroke-width="0.6"/><circle cx="71.5" cy="7" r="2.1" fill="none" stroke="#e2e7f0" stroke-width="0.55"/><path d="M71.5 6.3 v2" stroke="#e2e7f0" stroke-width="0.55"/><circle cx="71.5" cy="5.5" r="0.3" fill="#e2e7f0"/></svg><div class="tt" style="left:11px">Output_3</div></div>
<div class="a" style="left:1007px;top:139px;width:14px;height:44.5px;background:#1f2d49;border:1px solid #4b5b7c;border-right:none;border-radius:4px 0 0 4px"></div>
<div class="a" style="left:1007px;top:228px;width:14px;height:44.5px;background:#d4d5db;border:1px solid #e4e7f0;border-right:none;border-radius:4px 0 0 4px;overflow:hidden"><div style="height:12px;background:#8c9bb6"></div><svg class="a" style="left:-1px;top:-1px" width="14" height="14"><path d="M5.6 4.6 l3.2 4.6 M8.8 4.6 l-3.2 4.6" stroke="#dfe5f0" stroke-width="0.7"/><path d="M5 5.6 h1.2 M8.2 8.2 h1.2" stroke="#dfe5f0" stroke-width="0.6"/></svg></div>
<div class="a" style="left:1007px;top:318px;width:14px;height:44.5px;background:#1f2d49;border:1px solid #4b5b7c;border-right:none;border-radius:4px 0 0 4px"></div>
<div class="a" style="left:1007px;top:407px;width:14px;height:44.5px;background:#d4d5db;border:1px solid #e4e7f0;border-right:none;border-radius:4px 0 0 4px;overflow:hidden"><div style="height:12px;background:#8c9bb6"></div><svg class="a" style="left:-1px;top:-1px" width="14" height="14"><path d="M5.6 4.6 l3.2 4.6 M8.8 4.6 l-3.2 4.6" stroke="#dfe5f0" stroke-width="0.7"/><path d="M5 5.6 h1.2 M8.2 8.2 h1.2" stroke="#dfe5f0" stroke-width="0.6"/></svg></div>
<div class="a" style="left:60.5px;top:144px;width:113px;height:20px;border-radius:10px;background:#6a7ab2"></div>
<svg class="a" style="left:68px;top:148px" width="14" height="12"><path d="M6.6 1.5 v9 M2.1 6 h9" stroke="#eef1fa" stroke-width="1.5"/></svg>
<div class="a" style="left:83.6px;top:150.00px;font-size:8.50px;line-height:1;font-weight:bold;color:#e5e9f5;white-space:nowrap;transform-origin:0 0;transform:scaleX(0.990);">Open Step Selection</div>
<svg class="a" style="left:170px;top:138px" width="150" height="32" viewBox="170 138 150 32">
<circle cx="187" cy="154" r="10.1" fill="#6a7ab2"/>
<circle cx="211.2" cy="154" r="10.1" fill="#6a7ab2"/>
<circle cx="235" cy="154" r="10.1" fill="#6a7ab2"/>
<circle cx="258.9" cy="154" r="10.1" fill="#6a7ab2"/>
<circle cx="282.6" cy="154" r="10.1" fill="#454e72"/>
<circle cx="306.8" cy="154" r="10.1" fill="#454e72"/>
<g fill="#eef1fa" stroke="none">
<path d="M187 148.6 l1.8 1.9 h-1.2 v2.9 h2.9 v-1.2 l1.9 1.8 l-1.9 1.8 v-1.2 h-2.9 v2.9 h1.2 l-1.8 1.9 l-1.8 -1.9 h1.2 v-2.9 h-2.9 v1.2 l-1.9 -1.8 l1.9 -1.8 v1.2 h2.9 v-2.9 h-1.2z"/>
<rect x="205.4" y="152.4" width="4.2" height="2.8" rx="1"/><rect x="212.2" y="149.6" width="4.4" height="2.8" rx="1"/><path d="M215.6 153.6 l1.6 0.2 l-0.6 1.4z"/>
</g>
<g fill="none" stroke="#eef1fa" stroke-width="1.1">
<path d="M215.9 156.2 a1.7 1.7 0 1 1 -0.9 -1.5"/>
</g><g fill="#eef1fa"><path d="M233.40 152.40 L229.40 151.20 L232.20 148.40z M233.40 155.60 L229.40 156.80 L232.20 159.60z M236.60 152.40 L240.60 151.20 L237.80 148.40z M236.60 155.60 L240.60 156.80 L237.80 159.60z"/></g><g fill="none" stroke="#eef1fa" stroke-width="1.1">
<rect x="254.3" y="149.4" width="8.4" height="7.4"/>
<path d="M255.4 155.8 l2.4 -2.6 l1.4 1.4 l1 -1 l1.6 2" stroke-width="0.9"/>
</g>
<circle cx="262.6" cy="157.8" r="1.9" fill="#eef1fa"/>
<g fill="none" stroke="#8c95b5" stroke-width="1.1"><path d="M279.4 154.4 q3.3 -2.8 6.6 0"/><path d="M303.5 154.4 q3.3 -2.8 6.6 0"/></g>
<path d="M278.6 152.6 v2.8 h2.6z" fill="#8c95b5"/><path d="M310.9 152.6 v2.8 h-2.6z" fill="#8c95b5"/>
</svg>
<svg class="a" style="left:964px;top:140px" width="52" height="28" viewBox="964 140 52 28"><circle cx="978.7" cy="153.6" r="10.4" fill="#141521" opacity="0.6"/><circle cx="1002.5" cy="153.6" r="10.4" fill="#141521" opacity="0.6"/><circle cx="978.7" cy="153.6" r="10" fill="#7480b0"/><circle cx="1002.5" cy="153.6" r="10" fill="#7480b0"/><g fill="none" stroke="#eef1fa" stroke-width="1"><path d="M974.6 155 v-4.4 h8.2 v4.4"/><path d="M998.4 150.4 h8 M998.4 152.6 h8 M998.4 154.8 h3.4 M998.4 157 h3"/><circle cx="1004.2" cy="156" r="1.6"/><path d="M1005.3 157.1 l1.4 1.4"/></g><g fill="#eef1fa"><rect x="974" y="155.2" width="9.4" height="2"/><circle cx="977" cy="152.2" r="0.6"/><circle cx="980.4" cy="152.2" r="0.6"/></g></svg></body></html>
